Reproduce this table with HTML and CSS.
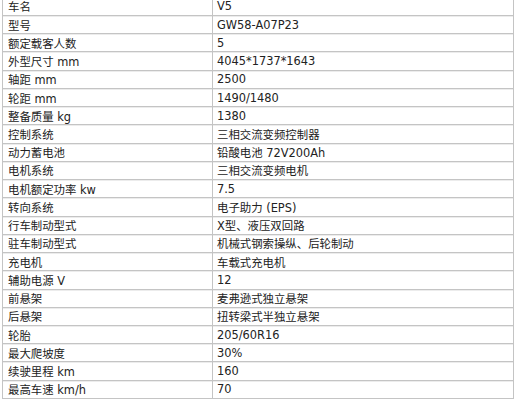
FILE: index.html
```html
<!DOCTYPE html>
<html>
<head>
<meta charset="utf-8">
<link rel="stylesheet" href="styles.css">
</head>
<body>
<div class="spec">
  <div class="row"><div class="k">车名</div><div class="v">V5</div></div>
  <div class="row"><div class="k">型号</div><div class="v">GW58-A07P23</div></div>
  <div class="row"><div class="k">额定载客人数</div><div class="v">5</div></div>
  <div class="row"><div class="k">外型尺寸 mm</div><div class="v">4045*1737*1643</div></div>
  <div class="row"><div class="k">轴距 mm</div><div class="v">2500</div></div>
  <div class="row"><div class="k">轮距 mm</div><div class="v">1490/1480</div></div>
  <div class="row"><div class="k">整备质量 kg</div><div class="v">1380</div></div>
  <div class="row"><div class="k">控制系统</div><div class="v">三相交流变频控制器</div></div>
  <div class="row"><div class="k">动力蓄电池</div><div class="v">铅酸电池 72V200Ah</div></div>
  <div class="row"><div class="k">电机系统</div><div class="v">三相交流变频电机</div></div>
  <div class="row"><div class="k">电机额定功率 kw</div><div class="v">7.5</div></div>
  <div class="row"><div class="k">转向系统</div><div class="v">电子助力 (EPS)</div></div>
  <div class="row"><div class="k">行车制动型式</div><div class="v">X型、液压双回路</div></div>
  <div class="row"><div class="k">驻车制动型式</div><div class="v">机械式钢索操纵、后轮制动</div></div>
  <div class="row"><div class="k">充电机</div><div class="v">车载式充电机</div></div>
  <div class="row"><div class="k">辅助电源 V</div><div class="v">12</div></div>
  <div class="row"><div class="k">前悬架</div><div class="v">麦弗逊式独立悬架</div></div>
  <div class="row"><div class="k">后悬架</div><div class="v">扭转梁式半独立悬架</div></div>
  <div class="row"><div class="k">轮胎</div><div class="v">205/60R16</div></div>
  <div class="row"><div class="k">最大爬坡度</div><div class="v">30%</div></div>
  <div class="row"><div class="k">续驶里程 km</div><div class="v">160</div></div>
  <div class="row"><div class="k">最高车速 km/h</div><div class="v">70</div></div>
</div>
</body>
</html>
```
FILE: styles.css
```css
html, body {
  margin: 0;
  padding: 0;
  background: #fff;
}
body {
  overflow: hidden;
}
.spec {
  margin: -2.25px 0 0 2px;
  width: 511px;
  border-left: 1px solid #c4c4c4;
  font-family: "DejaVu Sans", "Noto Sans CJK SC", sans-serif;
  font-size: 11.4px;
  color: #222;
}
.row {
  display: grid;
  grid-template-columns: 210px 1fr;
  height: 18.24px;
  box-sizing: border-box;
  border-bottom: 1px solid #c4c4c4;
  box-shadow: 0 1px 0 #ececec;
}
.k, .v {
  display: flex;
  align-items: center;
  padding-left: 5px;
  white-space: nowrap;
}
.k {
  border-right: 1px solid #c4c4c4;
}
.v {
  padding-left: 4px;
  border-right: 1px solid #c4c4c4;
}
```
